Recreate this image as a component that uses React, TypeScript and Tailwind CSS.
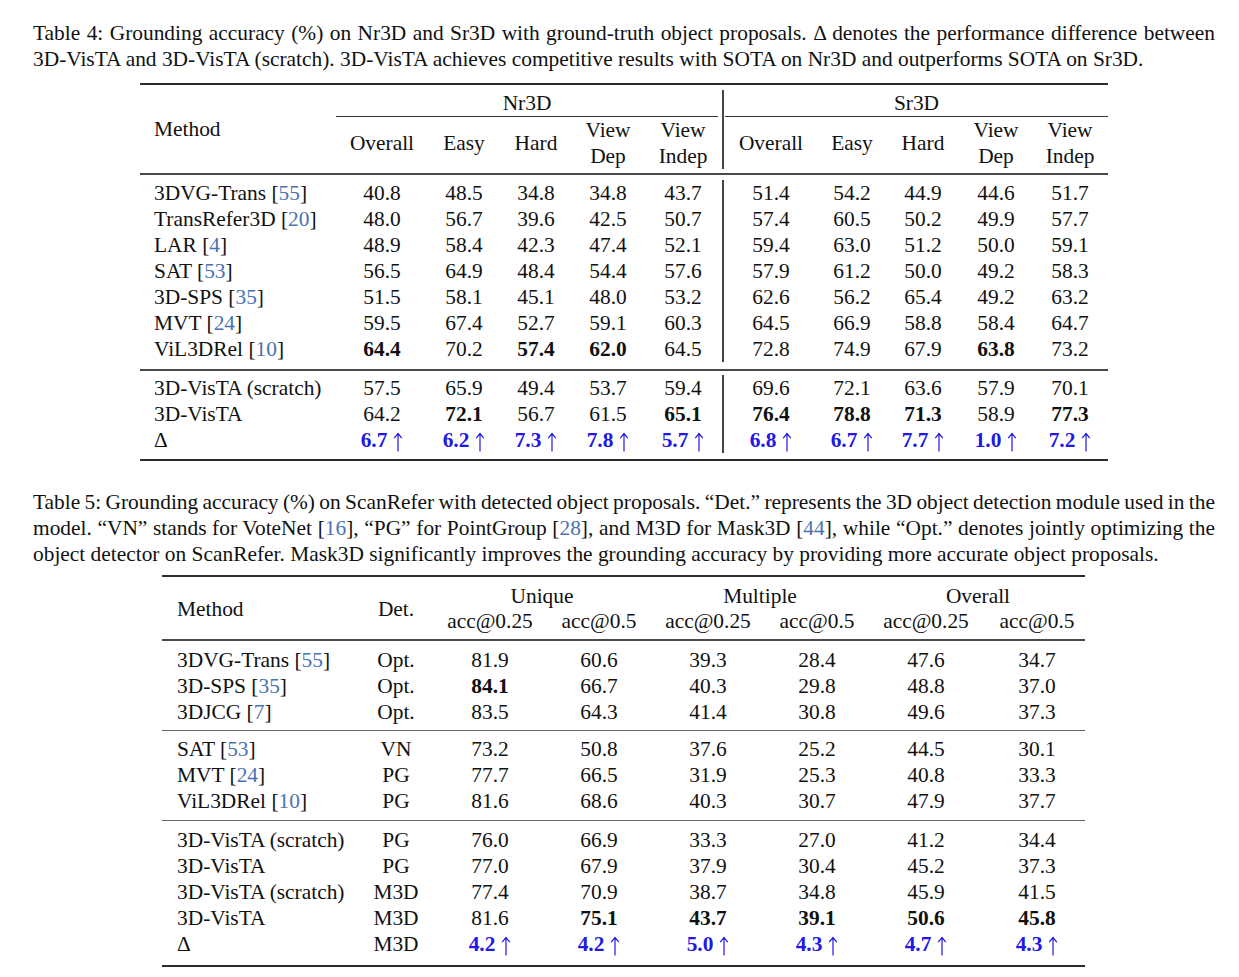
import React from "react";

type Row = { name: string; cite?: string; det?: string; vals: string[] };

const Arrow = () => (
  <svg width="10" height="20" viewBox="0 0 10 20" className="inline-block align-[-5px] ml-[6px]">
    <path d="M5 1.5V19.5M1.2 6.2L5 1.5L8.8 6.2" fill="none" stroke="#2318e8" strokeWidth="1.2" />
  </svg>
);

// "*" = bold, "+" = blue delta with arrow
const Cell = ({ v }: { v: string }) => {
  if (v.startsWith("+"))
    return (
      <span className="font-bold text-[#2318e8] whitespace-nowrap">
        {v.slice(1)}
        <Arrow />
      </span>
    );
  if (v.startsWith("*")) return <span className="font-bold">{v.slice(1)}</span>;
  return <>{v}</>;
};

const Cite = ({ n }: { n: string }) => (
  <>
    [<span className="text-[#4a72b0]">{n}</span>]
  </>
);

const Method = ({ r }: { r: Row }) => (
  <>
    {r.name}
    {r.cite && (
      <>
        {" "}
        <Cite n={r.cite} />
      </>
    )}
  </>
);

const grid4 = "grid grid-cols-[196px_92px_72px_72px_72px_78px_96px_68px_74px_72px_76px]";
const grid5 = "grid grid-cols-[203px_62px_126px_92px_126px_92px_126px_96px]";

const t4a: Row[] = [
  { name: "3DVG-Trans", cite: "55", vals: ["40.8", "48.5", "34.8", "34.8", "43.7", "51.4", "54.2", "44.9", "44.6", "51.7"] },
  { name: "TransRefer3D", cite: "20", vals: ["48.0", "56.7", "39.6", "42.5", "50.7", "57.4", "60.5", "50.2", "49.9", "57.7"] },
  { name: "LAR", cite: "4", vals: ["48.9", "58.4", "42.3", "47.4", "52.1", "59.4", "63.0", "51.2", "50.0", "59.1"] },
  { name: "SAT", cite: "53", vals: ["56.5", "64.9", "48.4", "54.4", "57.6", "57.9", "61.2", "50.0", "49.2", "58.3"] },
  { name: "3D-SPS", cite: "35", vals: ["51.5", "58.1", "45.1", "48.0", "53.2", "62.6", "56.2", "65.4", "49.2", "63.2"] },
  { name: "MVT", cite: "24", vals: ["59.5", "67.4", "52.7", "59.1", "60.3", "64.5", "66.9", "58.8", "58.4", "64.7"] },
  { name: "ViL3DRel", cite: "10", vals: ["*64.4", "70.2", "*57.4", "*62.0", "64.5", "72.8", "74.9", "67.9", "*63.8", "73.2"] },
];

const t4b: Row[] = [
  { name: "3D-VisTA (scratch)", vals: ["57.5", "65.9", "49.4", "53.7", "59.4", "69.6", "72.1", "63.6", "57.9", "70.1"] },
  { name: "3D-VisTA", vals: ["64.2", "*72.1", "56.7", "61.5", "*65.1", "*76.4", "*78.8", "*71.3", "58.9", "*77.3"] },
  { name: "Δ", vals: ["+6.7", "+6.2", "+7.3", "+7.8", "+5.7", "+6.8", "+6.7", "+7.7", "+1.0", "+7.2"] },
];

const t5: Row[][] = [
  [
    { name: "3DVG-Trans", cite: "55", det: "Opt.", vals: ["81.9", "60.6", "39.3", "28.4", "47.6", "34.7"] },
    { name: "3D-SPS", cite: "35", det: "Opt.", vals: ["*84.1", "66.7", "40.3", "29.8", "48.8", "37.0"] },
    { name: "3DJCG", cite: "7", det: "Opt.", vals: ["83.5", "64.3", "41.4", "30.8", "49.6", "37.3"] },
  ],
  [
    { name: "SAT", cite: "53", det: "VN", vals: ["73.2", "50.8", "37.6", "25.2", "44.5", "30.1"] },
    { name: "MVT", cite: "24", det: "PG", vals: ["77.7", "66.5", "31.9", "25.3", "40.8", "33.3"] },
    { name: "ViL3DRel", cite: "10", det: "PG", vals: ["81.6", "68.6", "40.3", "30.7", "47.9", "37.7"] },
  ],
  [
    { name: "3D-VisTA (scratch)", det: "PG", vals: ["76.0", "66.9", "33.3", "27.0", "41.2", "34.4"] },
    { name: "3D-VisTA", det: "PG", vals: ["77.0", "67.9", "37.9", "30.4", "45.2", "37.3"] },
    { name: "3D-VisTA (scratch)", det: "M3D", vals: ["77.4", "70.9", "38.7", "34.8", "45.9", "41.5"] },
    { name: "3D-VisTA", det: "M3D", vals: ["81.6", "*75.1", "*43.7", "*39.1", "*50.6", "*45.8"] },
    { name: "Δ", det: "M3D", vals: ["+4.2", "+4.2", "+5.0", "+4.3", "+4.7", "+4.3"] },
  ],
];

// justified caption line; negative word spacing keeps it on one line, justify spreads it back
const Line = ({ children, last }: { children: React.ReactNode; last?: boolean }) => (
  <span
    className={`block whitespace-nowrap ${
      last ? "text-left" : "text-justify [text-align-last:justify] [word-spacing:-2px]"
    }`}
  >
    {children}
  </span>
);

function Row4({ r }: { r: Row }) {
  return (
    <div className={`${grid4} h-[26px] leading-[26px]`}>
      <div className="pl-[14px] whitespace-nowrap">
        <Method r={r} />
      </div>
      {r.vals.map((v, i) => (
        <div key={i} className={`text-center whitespace-nowrap ${i === 5 ? "border-l-2 border-[#444]" : ""}`}>
          <Cell v={v} />
        </div>
      ))}
    </div>
  );
}

function Row5({ r }: { r: Row }) {
  return (
    <div className={`${grid5} h-[26px] leading-[26px]`}>
      <div className="pl-[15px] whitespace-nowrap">
        <Method r={r} />
      </div>
      <div className="text-center">{r.det}</div>
      {r.vals.map((v, i) => (
        <div key={i} className="text-center whitespace-nowrap">
          <Cell v={v} />
        </div>
      ))}
    </div>
  );
}

export default function App() {
  const sub = ["Overall", "Easy", "Hard", "View|Dep", "View|Indep"];
  return (
    <div className="min-h-screen bg-white text-[#111] [font-family:'Liberation_Serif',serif] text-[21.4px] leading-[26px] pt-[20px]">
      {/* Table 4 caption */}
      <div className="pl-[33px] pr-[24px]">
        <Line>
          Table 4: Grounding accuracy (%) on Nr3D and Sr3D with ground-truth object proposals. Δ denotes the performance difference between
        </Line>
        <Line last>
          3D-VisTA and 3D-VisTA (scratch). 3D-VisTA achieves competitive results with SOTA on Nr3D and outperforms SOTA on Sr3D.
        </Line>
      </div>

      {/* Table 4 */}
      <div className="ml-[140px] w-[968px] mt-[11px]">
        <div className="h-[2px] bg-[#2b2b2b]" />
        <div className={`${grid4} grid-rows-[27px_52px] mt-[5px]`}>
          <div className="row-span-2 flex items-center pl-[14px] pb-[2px]">Method</div>
          <div className="col-span-5 mr-[4px] border-b border-[#333] text-center">Nr3D</div>
          <div className="col-span-5 border-l-2 border-[#444]">
            <div className="ml-[1px] h-full border-b border-[#333] text-center">Sr3D</div>
          </div>
          {[...sub, ...sub].map((s, i) => (
            <div
              key={i}
              className={`flex items-center justify-center text-center ${i === 5 ? "border-l-2 border-[#444]" : ""}`}
            >
              {s.includes("|") ? (
                <span>
                  {s.split("|")[0]}
                  <br />
                  {s.split("|")[1]}
                </span>
              ) : (
                s
              )}
            </div>
          ))}
        </div>
        <div className="h-[2px] bg-[#4a4a4a] mt-[4px] mb-[5px]" />
        {t4a.map((r, i) => (
          <Row4 key={i} r={r} />
        ))}
        <div className="h-[2px] bg-[#4a4a4a] mt-[7px] mb-[4px]" />
        {t4b.map((r, i) => (
          <Row4 key={i} r={r} />
        ))}
        <div className="h-[2px] bg-[#2b2b2b] mt-[6px]" />
      </div>

      {/* Table 5 caption */}
      <div className="pl-[33px] pr-[24px] mt-[28px]">
        <Line>
          Table 5: Grounding accuracy (%) on ScanRefer with detected object proposals. “Det.” represents the 3D object detection module used in the
        </Line>
        <Line>
          model. “VN” stands for VoteNet <Cite n="16" />, “PG” for PointGroup <Cite n="28" />, and M3D for Mask3D <Cite n="44" />, while “Opt.” denotes jointly optimizing the
        </Line>
        <Line last>
          object detector on ScanRefer. Mask3D significantly improves the grounding accuracy by providing more accurate object proposals.
        </Line>
      </div>

      {/* Table 5 */}
      <div className="ml-[162px] w-[923px] mt-[8px]">
        <div className="h-[2px] bg-[#2b2b2b]" />
        <div className={`${grid5} grid-rows-[25px_26px] mt-[6px]`}>
          <div className="row-span-2 flex items-center pl-[15px]">Method</div>
          <div className="row-span-2 flex items-center justify-center">Det.</div>
          <div className="col-span-2 text-center pl-[12px]">Unique</div>
          <div className="col-span-2 text-center pl-[12px]">Multiple</div>
          <div className="col-span-2 text-center pl-[8px]">Overall</div>
          {["acc@0.25", "acc@0.5", "acc@0.25", "acc@0.5", "acc@0.25", "acc@0.5"].map((s, i) => (
            <div key={i} className="text-center">
              {s}
            </div>
          ))}
        </div>
        <div className="h-[2px] bg-[#4a4a4a] mt-[5px] mb-[6px]" />
        {t5[0].map((r, i) => (
          <Row5 key={i} r={r} />
        ))}
        <div className="h-px bg-[#666] mt-[5px] mb-[5px]" />
        {t5[1].map((r, i) => (
          <Row5 key={i} r={r} />
        ))}
        <div className="h-px bg-[#666] mt-[6px] mb-[6px]" />
        {t5[2].map((r, i) => (
          <Row5 key={i} r={r} />
        ))}
        <div className="h-[2px] bg-[#2b2b2b] mt-[8px]" />
      </div>
    </div>
  );
}
